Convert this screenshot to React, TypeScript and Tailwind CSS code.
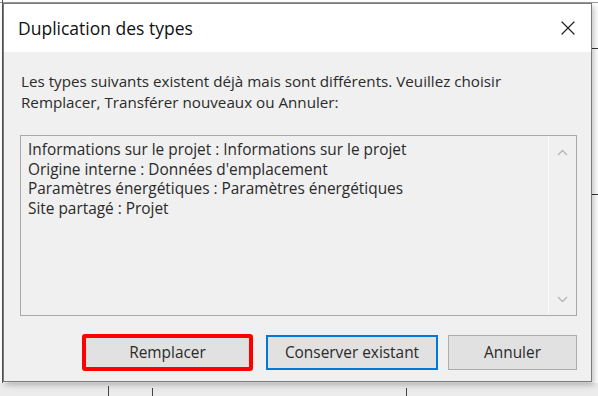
import { X } from "lucide-react";

const lines = [
  "Informations sur le projet : Informations sur le projet",
  "Origine interne : Données d'emplacement",
  "Paramètres énergétiques : Paramètres énergétiques",
  "Site partagé : Projet",
];

function Chevron({ up }: { up?: boolean }) {
  return (
    <svg width="11" height="7" viewBox="0 0 11 7" className="block">
      <path
        d={up ? "M1 6 L5.5 1.5 L10 6" : "M1 1 L5.5 5.5 L10 1"}
        fill="none"
        stroke="#b4b4b4"
        strokeWidth="1.3"
      />
    </svg>
  );
}

export default function App() {
  return (
    <div className="relative w-[598px] h-[396px] overflow-hidden bg-white font-['Segoe_UI','Open_Sans',sans-serif] text-[#1e1e1e]">
      {/* drawing behind the dialog */}
      <div className="absolute left-0 top-[2px] w-[598px] h-px bg-[#9a9a9a]" />
      <div className="absolute left-[2px] top-0 w-px h-[396px] bg-[#555]" />
      <div className="absolute left-0 top-[383px] w-[598px] h-[13px] bg-[#ececec]" />
      <div className="absolute left-[108px] top-[386px] w-px h-[10px] bg-[#444]" />
      <div className="absolute left-[152px] top-[388px] w-px h-[8px] bg-[#444]" />
      <div className="absolute left-[406px] top-[388px] w-px h-[8px] bg-[#444]" />
      <div className="absolute left-[591px] top-[48px] w-[7px] h-px bg-[#333]" />
      <div className="absolute left-[591px] top-[194px] w-[7px] h-px bg-[#333]" />

      <div className="relative ml-[3px] mt-[3px] w-[589px] h-[379px] border border-[#7a7a7a] bg-[#f0f0f0] shadow-[2px_3px_6px_rgba(0,0,0,0.25)] flex flex-col">
        <div className="h-[48px] bg-white flex items-center justify-between pl-[14px] pr-[11px]">
          <span className="text-[17.5px] text-[#111]">Duplication des types</span>
          <X className="w-[24px] h-[24px] text-[#222]" strokeWidth={1.2} />
        </div>

        <div className="flex flex-col pl-[16px] pr-[14px] pt-[19px]">
          <p className="text-[15.2px] leading-[21px] text-[#2a2a2a] pl-[1px]">
            Les types suivants existent déjà mais sont différents. Veuillez choisir
            <br />
            Remplacer, Transférer nouveaux ou Annuler:
          </p>

          <div className="mt-[22px] h-[181px] border border-[#a9a9a9] flex">
            <div className="flex-1 pl-[7px] pt-[4px] text-[15.4px] leading-[19.6px] text-[#2a2a2a]">
              {lines.map((l) => (
                <div key={l}>{l}</div>
              ))}
            </div>
            <div className="w-[28px] border-l border-[#fafafa] flex flex-col items-center justify-between pt-[13px] pb-[12px]">
              <Chevron up />
              <Chevron />
            </div>
          </div>

          <div className="mt-[18px] flex items-center justify-end">
            <div className="w-[171px] h-[37px] rounded-[3px] border-[4px] border-[#ff0000] bg-[#e1e1e1] flex items-center justify-center text-[15.4px] text-[#2a2a2a] mr-[13px]">
              Remplacer
            </div>
            <div className="w-[172px] h-[35px] border-2 border-[#0078d7] bg-[#e1e1e1] flex items-center justify-center text-[15.4px] text-[#2a2a2a] mr-[10px]">
              Conserver existant
            </div>
            <div className="w-[129px] h-[35px] border border-[#adadad] bg-[#e1e1e1] flex items-center justify-center text-[15.4px] text-[#2a2a2a]">
              Annuler
            </div>
          </div>
        </div>
      </div>
    </div>
  );
}
